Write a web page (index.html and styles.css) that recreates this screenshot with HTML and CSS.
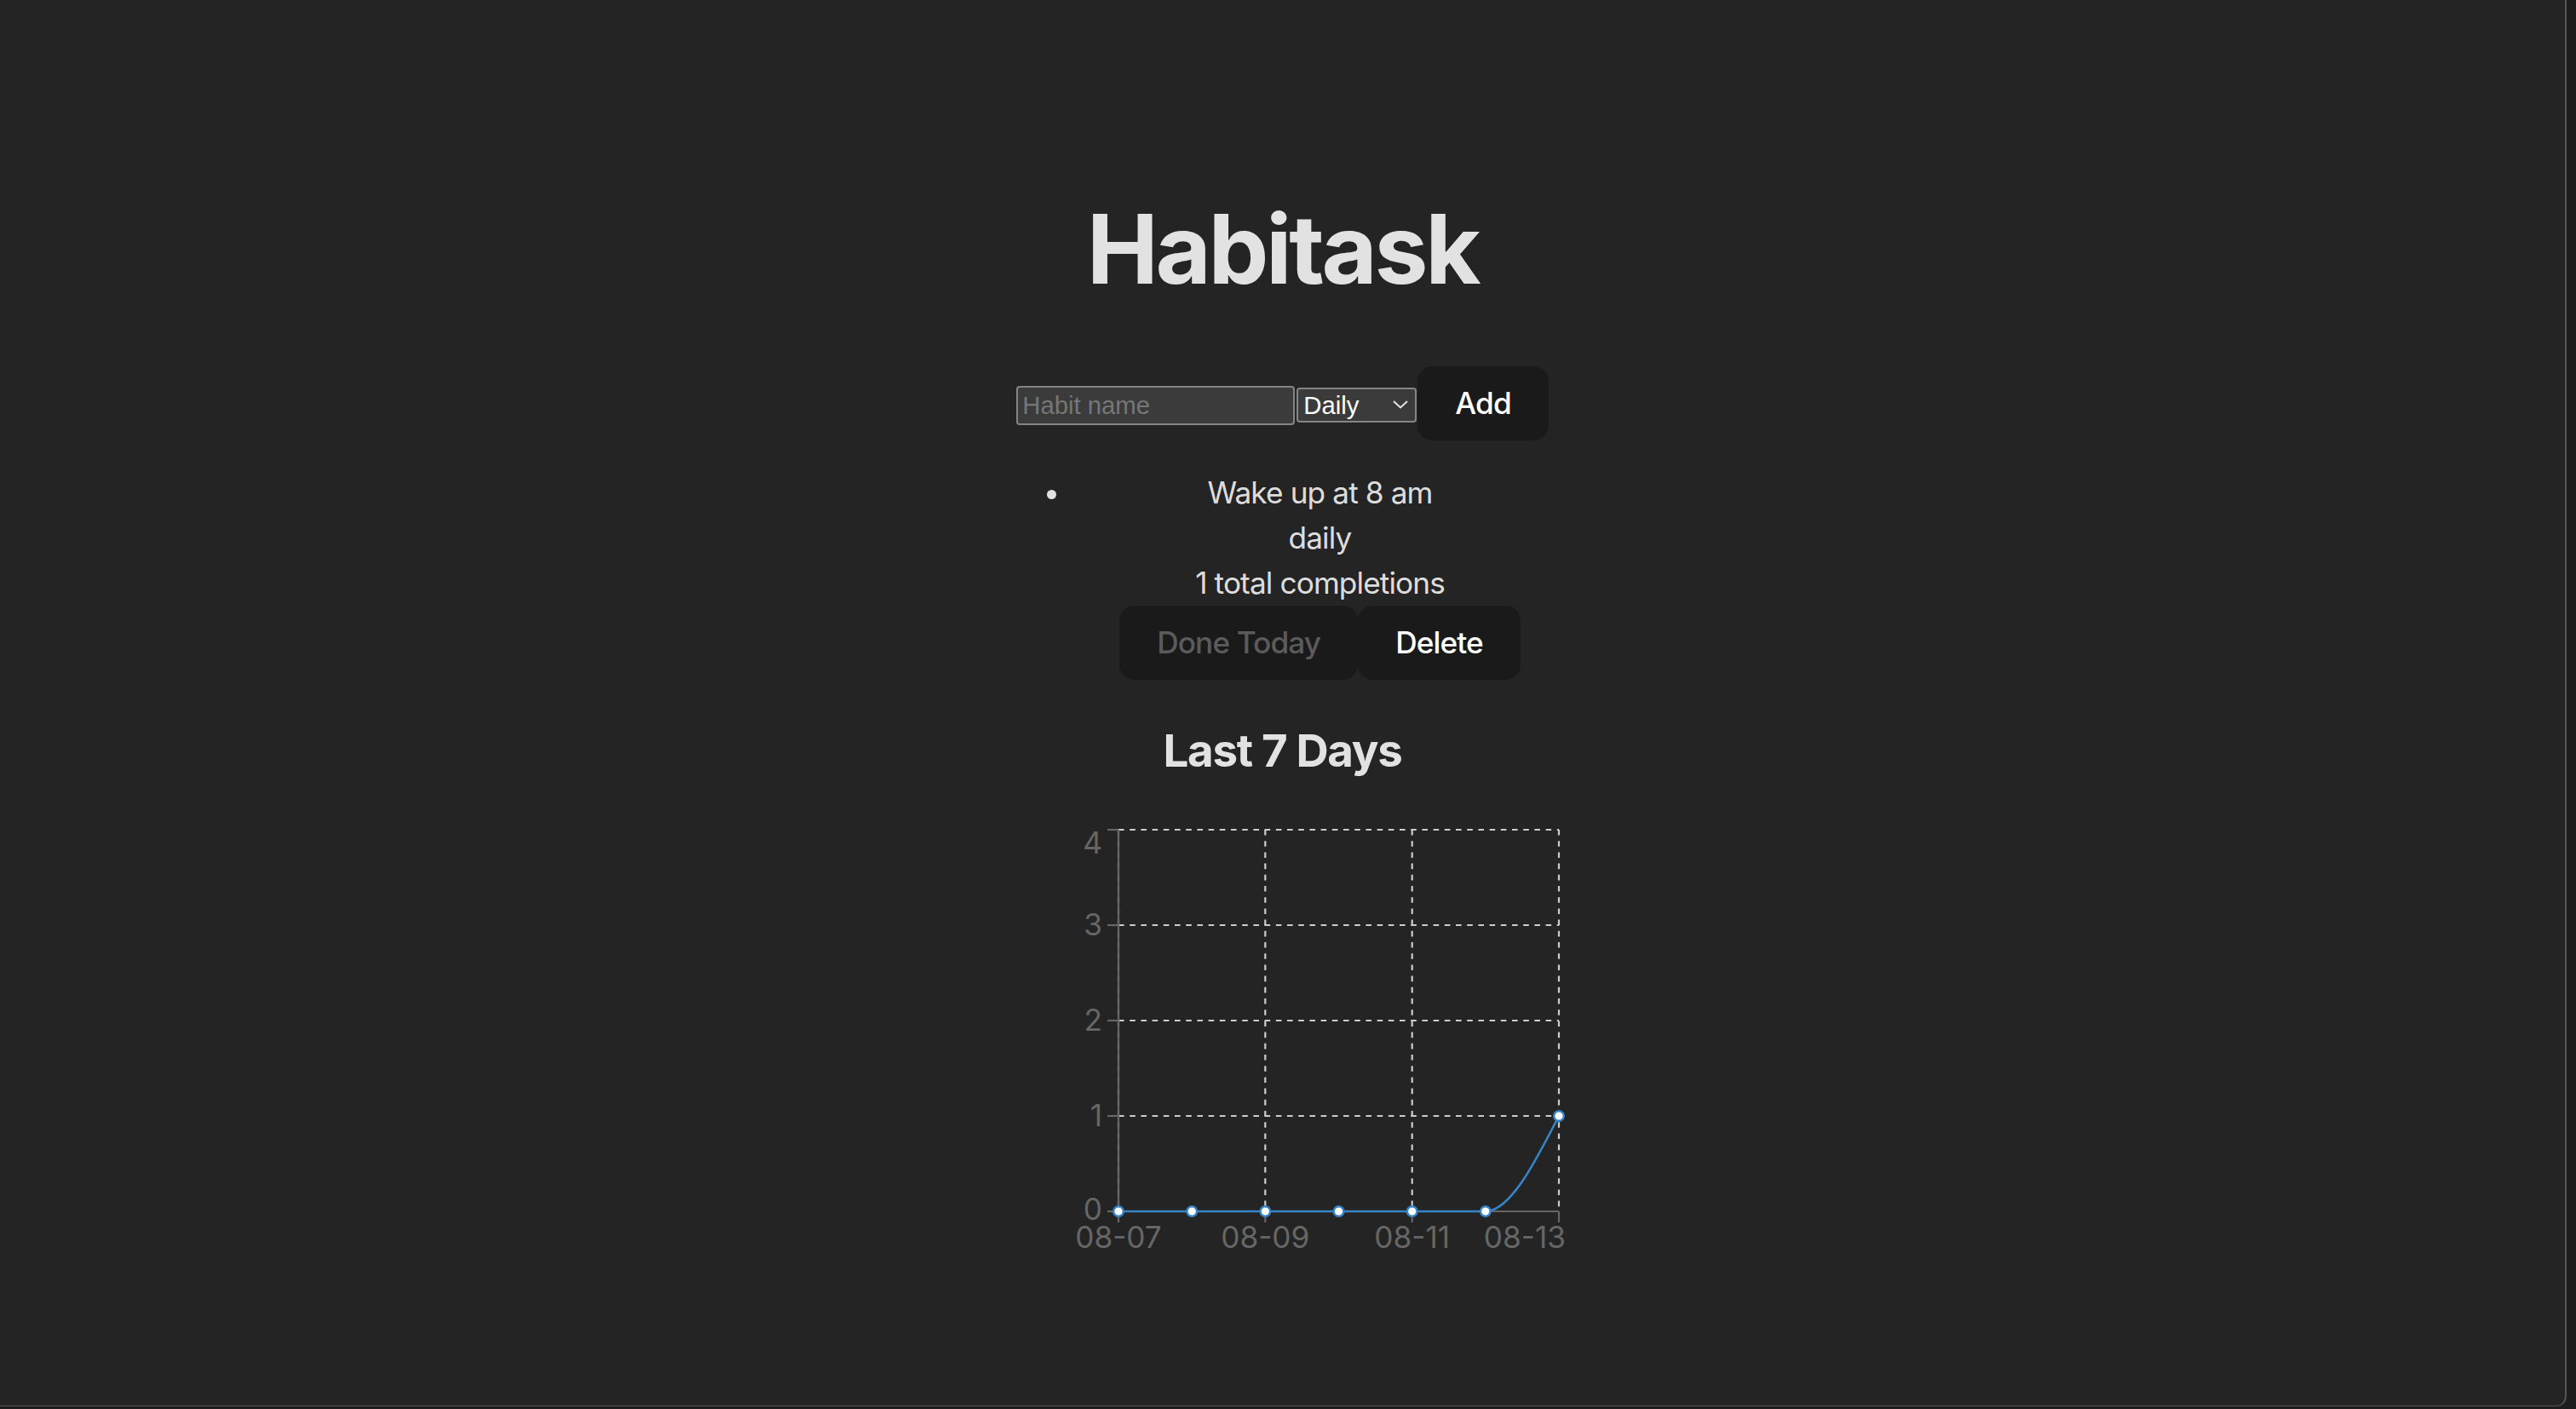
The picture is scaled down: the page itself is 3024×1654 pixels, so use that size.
FILE: index.html
```html
<!DOCTYPE html>
<html lang="en">
<head>
    <meta charset="UTF-8">
    <meta name="viewport" content="width=device-width, initial-scale=1.0">
    <title>Habitask</title>
    <link rel="stylesheet" href="styles.css">
</head>
<body>
    <div class="app">
        <div id="root">
            <h1>Habitask</h1>

            <form class="add-form">
                <input type="text" class="habit-input" placeholder="Habit name"><span class="select-wrap"><select class="freq-select">
                        <option>Daily</option>
                        <option>Weekly</option>
                    </select><svg class="chevron" width="18" height="10" viewBox="0 0 18 10"><path d="M1 1 L9 8.5 L17 1" /></svg></span><button type="submit" class="btn btn-add">Add</button>
            </form>

            <ul class="habit-list">
                <li>
                    <div class="habit-name">Wake up at 8 am</div>
                    <div class="habit-freq">daily</div>
                    <div class="habit-count">1 total completions</div>
                    <div class="habit-actions"><button class="btn" disabled>Done Today</button><button class="btn">Delete</button></div>
                </li>
            </ul>

            <h2>Last 7 Days</h2>

            <svg class="chart" width="671" height="530" viewBox="0 0 671 530">
                <g class="grid">
                    <line x1="143" y1="9" x2="660" y2="9" />
                    <line x1="143" y1="121" x2="660" y2="121" />
                    <line x1="143" y1="233" x2="660" y2="233" />
                    <line x1="143" y1="345" x2="660" y2="345" />
                    <line x1="143" y1="457" x2="660" y2="457" />
                    <line x1="143" y1="9" x2="143" y2="457" />
                    <line x1="315.3" y1="9" x2="315.3" y2="457" />
                    <line x1="487.7" y1="9" x2="487.7" y2="457" />
                    <line x1="660" y1="9" x2="660" y2="457" />
                </g>

                <g class="axis">
                    <line x1="143" y1="9" x2="143" y2="457" />
                    <line x1="130" y1="9" x2="143" y2="9" />
                    <line x1="130" y1="121" x2="143" y2="121" />
                    <line x1="130" y1="233" x2="143" y2="233" />
                    <line x1="130" y1="345" x2="143" y2="345" />
                    <line x1="130" y1="457" x2="143" y2="457" />

                    <line x1="143" y1="457" x2="660" y2="457" />
                    <line x1="143" y1="457" x2="143" y2="470" />
                    <line x1="315.3" y1="457" x2="315.3" y2="470" />
                    <line x1="487.7" y1="457" x2="487.7" y2="470" />
                    <line x1="660" y1="457" x2="660" y2="470" />
                </g>

                <g class="tick-labels y-labels">
                    <text x="124" y="25" dy="0.355em">4</text>
                    <text x="124" y="121" dy="0.355em">3</text>
                    <text x="124" y="233" dy="0.355em">2</text>
                    <text x="124" y="345" dy="0.355em">1</text>
                    <text x="124" y="455" dy="0.355em">0</text>
                </g>

                <g class="tick-labels x-labels">
                    <text x="143" y="500">08-07</text>
                    <text x="315.3" y="500">08-09</text>
                    <text x="487.7" y="500">08-11</text>
                    <text x="668" y="500" class="last">08-13</text>
                </g>

                <path class="series" d="M143 457 L573.8 457 C602.5 457 631.3 401 660 345" />

                <g class="dots">
                    <circle cx="143" cy="457" r="5.8" />
                    <circle cx="229.2" cy="457" r="5.8" />
                    <circle cx="315.3" cy="457" r="5.8" />
                    <circle cx="401.5" cy="457" r="5.8" />
                    <circle cx="487.7" cy="457" r="5.8" />
                    <circle cx="573.8" cy="457" r="5.8" />
                    <circle cx="660" cy="345" r="5.8" />
                </g>
            </svg>
        </div>
    </div>
</body>
</html>
```

FILE: styles.css
```css
* {
    box-sizing: border-box;
}

body {
    margin: 0;
    background-color: #1d1d1d;
    font-family: Inter, "Liberation Sans", sans-serif;
    font-size: 35.2px;
    line-height: 52.8px;
    font-weight: 400;
    color: rgba(255, 255, 255, 0.87);
}

.app {
    width: 3013px;
    height: 1651px;
    display: flex;
    align-items: center;
    justify-content: center;
    background-color: #242424;
    border-right: 2px solid #555;
    border-bottom: 1px solid #555;
    border-bottom-right-radius: 12px;
}

#root {
    padding: 70.4px;
    text-align: center;
    letter-spacing: -0.025em;
}

h1 {
    font-size: 112.6px;
    line-height: 123.9px;
    font-weight: 700;
    letter-spacing: -0.03em;
    margin: 75.4px 0;
}

h2 {
    font-size: 52.8px;
    line-height: 79.2px;
    font-weight: 700;
    letter-spacing: -0.025em;
    margin: 43.8px 0;
}

/* add habit row */

.habit-input {
    width: 327px;
    height: 46px;
    padding: 0 5px;
    border: 2px solid #858585;
    border-radius: 4px;
    background-color: #3b3b3b;
    color: #fff;
    font-family: "Liberation Sans", Arial, sans-serif;
    font-size: 29.3px;
    outline: none;
}

.habit-input::placeholder {
    color: #767676;
}

.select-wrap {
    display: inline-flex;
    position: relative;
    margin-left: 2px;
}

.freq-select {
    appearance: none;
    width: 141px;
    height: 41px;
    padding: 0 0 0 6px;
    border: 2px solid #858585;
    border-radius: 4px;
    background-color: #3b3b3b;
    color: #fff;
    font-family: "Liberation Sans", Arial, sans-serif;
    font-size: 29.3px;
}

.chevron {
    position: absolute;
    right: 10px;
    top: 15px;
    fill: none;
    stroke: #e6e6e6;
    stroke-width: 2;
    pointer-events: none;
}

.btn {
    padding: 21px 42px;
    line-height: 41px;
    border: 2px solid transparent;
    border-radius: 17.6px;
    background-color: #1a1a1a;
    color: #fff;
    font-family: inherit;
    font-size: 35.2px;
    font-weight: 500;
    letter-spacing: -0.025em;
    cursor: pointer;
}

.btn:disabled {
    color: #5b5b5b;
    cursor: default;
}

.btn-add {
    margin-left: 1px;
}

/* list */

.habit-list {
    margin: 35.2px 0;
    padding-left: 88px;
}

/* chart */

.chart {
    display: block;
    font-family: Inter, "Liberation Sans", sans-serif;
    letter-spacing: normal;
}

.grid line {
    stroke: #ccc;
    stroke-width: 2.2;
    stroke-dasharray: 6.6 6.6;
}

.axis line {
    stroke: #666;
    stroke-width: 2.2;
}

.tick-labels text {
    fill: #666;
    font-size: 35.2px;
}

.y-labels text {
    text-anchor: end;
}

.x-labels text {
    text-anchor: middle;
}

.x-labels text.last {
    text-anchor: end;
}

.series {
    fill: none;
    stroke: #3784c6;
    stroke-width: 2.6;
}

.dots circle {
    fill: #fff;
    stroke: #3784c6;
    stroke-width: 2.4;
}
```
